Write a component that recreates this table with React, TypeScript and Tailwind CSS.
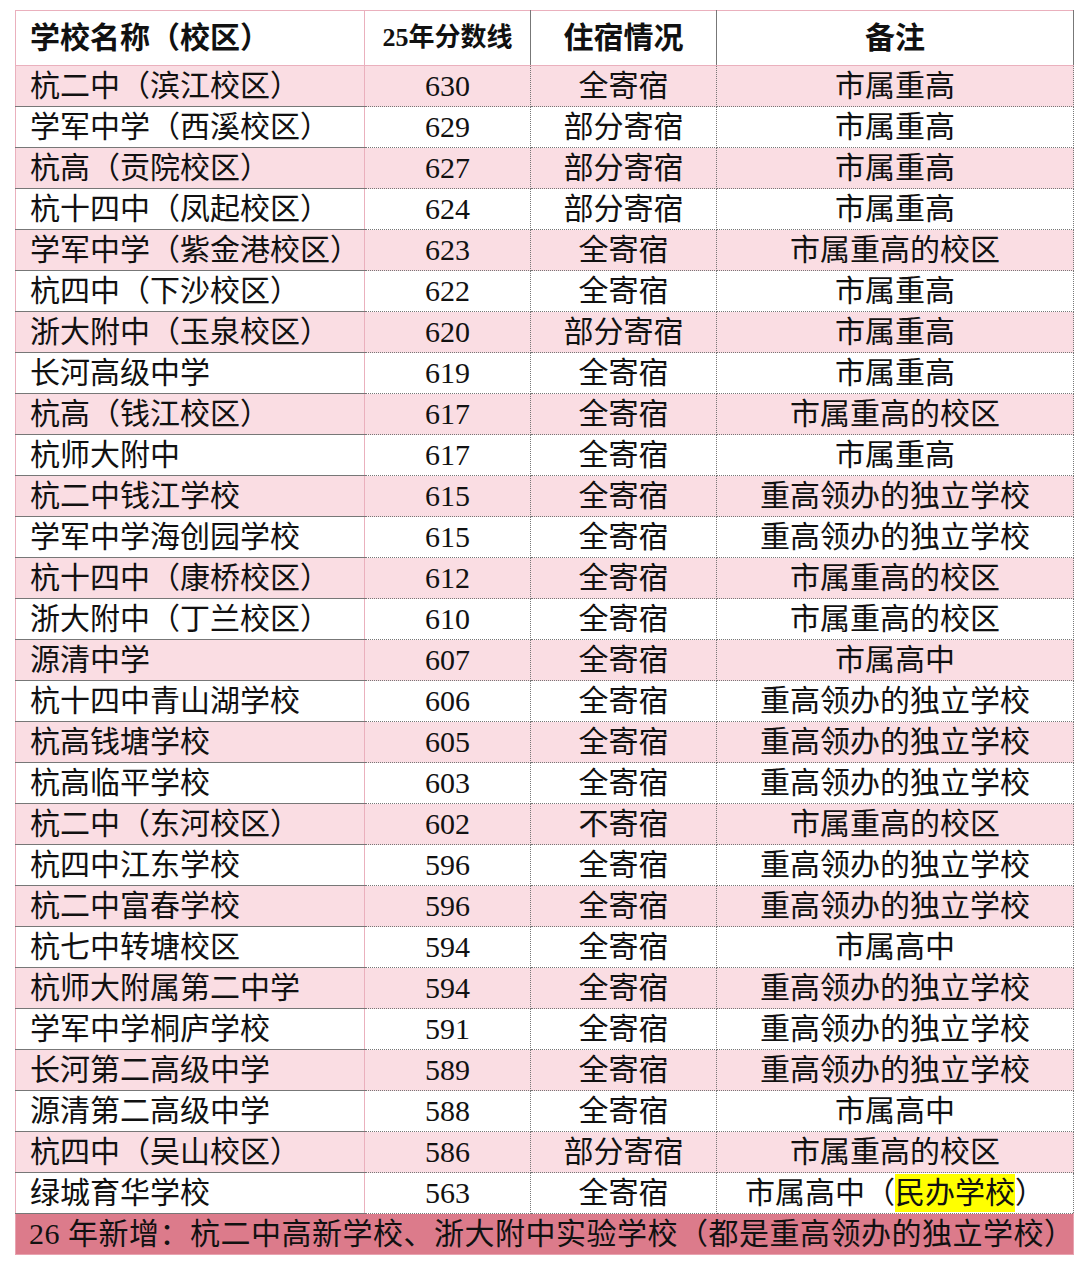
const rows: [string, string, string, string][] = [
  ["杭二中（滨江校区）", "630", "全寄宿", "市属重高"],
  ["学军中学（西溪校区）", "629", "部分寄宿", "市属重高"],
  ["杭高（贡院校区）", "627", "部分寄宿", "市属重高"],
  ["杭十四中（凤起校区）", "624", "部分寄宿", "市属重高"],
  ["学军中学（紫金港校区）", "623", "全寄宿", "市属重高的校区"],
  ["杭四中（下沙校区）", "622", "全寄宿", "市属重高"],
  ["浙大附中（玉泉校区）", "620", "部分寄宿", "市属重高"],
  ["长河高级中学", "619", "全寄宿", "市属重高"],
  ["杭高（钱江校区）", "617", "全寄宿", "市属重高的校区"],
  ["杭师大附中", "617", "全寄宿", "市属重高"],
  ["杭二中钱江学校", "615", "全寄宿", "重高领办的独立学校"],
  ["学军中学海创园学校", "615", "全寄宿", "重高领办的独立学校"],
  ["杭十四中（康桥校区）", "612", "全寄宿", "市属重高的校区"],
  ["浙大附中（丁兰校区）", "610", "全寄宿", "市属重高的校区"],
  ["源清中学", "607", "全寄宿", "市属高中"],
  ["杭十四中青山湖学校", "606", "全寄宿", "重高领办的独立学校"],
  ["杭高钱塘学校", "605", "全寄宿", "重高领办的独立学校"],
  ["杭高临平学校", "603", "全寄宿", "重高领办的独立学校"],
  ["杭二中（东河校区）", "602", "不寄宿", "市属重高的校区"],
  ["杭四中江东学校", "596", "全寄宿", "重高领办的独立学校"],
  ["杭二中富春学校", "596", "全寄宿", "重高领办的独立学校"],
  ["杭七中转塘校区", "594", "全寄宿", "市属高中"],
  ["杭师大附属第二中学", "594", "全寄宿", "重高领办的独立学校"],
  ["学军中学桐庐学校", "591", "全寄宿", "重高领办的独立学校"],
  ["长河第二高级中学", "589", "全寄宿", "重高领办的独立学校"],
  ["源清第二高级中学", "588", "全寄宿", "市属高中"],
  ["杭四中（吴山校区）", "586", "部分寄宿", "市属重高的校区"],
];

export default function App() {
  return (
    <div className="min-h-[1267px] bg-white pt-[10px] pl-[15px] font-['Liberation_Serif','Noto_Sans_CJK_SC',serif] text-[#111]">
      <table className="w-[1058px] table-fixed border-collapse">
        <colgroup>
          <col className="w-[349px]" />
          <col className="w-[166px]" />
          <col className="w-[186px]" />
          <col className="w-[357px]" />
        </colgroup>
        <thead>
          <tr className="h-[55px] bg-white">
            <th className="border-t border-l border-r border-b border-[#eab0bd] pl-[14px] text-left text-[30px] font-bold leading-none">
              学校名称（校区）
            </th>
            <th className="border-t border-b border-[#eab0bd] border-r border-r-dotted border-r-[#777] text-center text-[26px] font-bold leading-none">
              25年分数线
            </th>
            <th className="border-t border-b border-[#eab0bd] border-r border-r-dotted border-r-[#777] text-center text-[30px] font-bold leading-none">
              住宿情况
            </th>
            <th className="border-t border-b border-[#eab0bd] border-r border-r-dotted border-r-[#777] text-center text-[30px] font-bold leading-none">
              备注
            </th>
          </tr>
        </thead>
        <tbody className="text-[30px] leading-none">
          {rows.map((r, i) => (
            <tr key={i} className={i % 2 === 0 ? "h-[41px] bg-[#fadde3]" : "h-[41px] bg-white"}>
              <td className="border-l border-r border-[#eab0bd] border-b border-b-dotted border-b-[#777] pl-[14px] text-left whitespace-nowrap">
                {r[0]}
              </td>
              <td className="border-b border-dotted border-[#777] border-r text-center">{r[1]}</td>
              <td className="border-b border-dotted border-[#777] border-r text-center">{r[2]}</td>
              <td className="border-b border-dotted border-[#777] border-r text-center">{r[3]}</td>
            </tr>
          ))}
          <tr className="h-[41px] bg-white">
            <td className="border-l border-r border-[#eab0bd] border-b border-b-dotted border-b-[#777] pl-[14px] text-left">
              绿城育华学校
            </td>
            <td className="border-b border-dotted border-[#777] border-r text-center">563</td>
            <td className="border-b border-dotted border-[#777] border-r text-center">全寄宿</td>
            <td className="border-b border-dotted border-[#777] border-r text-center whitespace-nowrap">
              市属高中（<span className="inline-block bg-[#ffff00] py-[4px]">民办学校</span>）
            </td>
          </tr>
          <tr className="h-[41px] bg-[#dc7b8b]">
            <td
              colSpan={4}
              className="border-l border-r border-b border-[#e8a3b0] pl-[13px] text-left text-[30px] tracking-[0.5px] whitespace-nowrap"
            >
              26 年新增：杭二中高新学校、浙大附中实验学校（都是重高领办的独立学校）
            </td>
          </tr>
        </tbody>
      </table>
    </div>
  );
}
